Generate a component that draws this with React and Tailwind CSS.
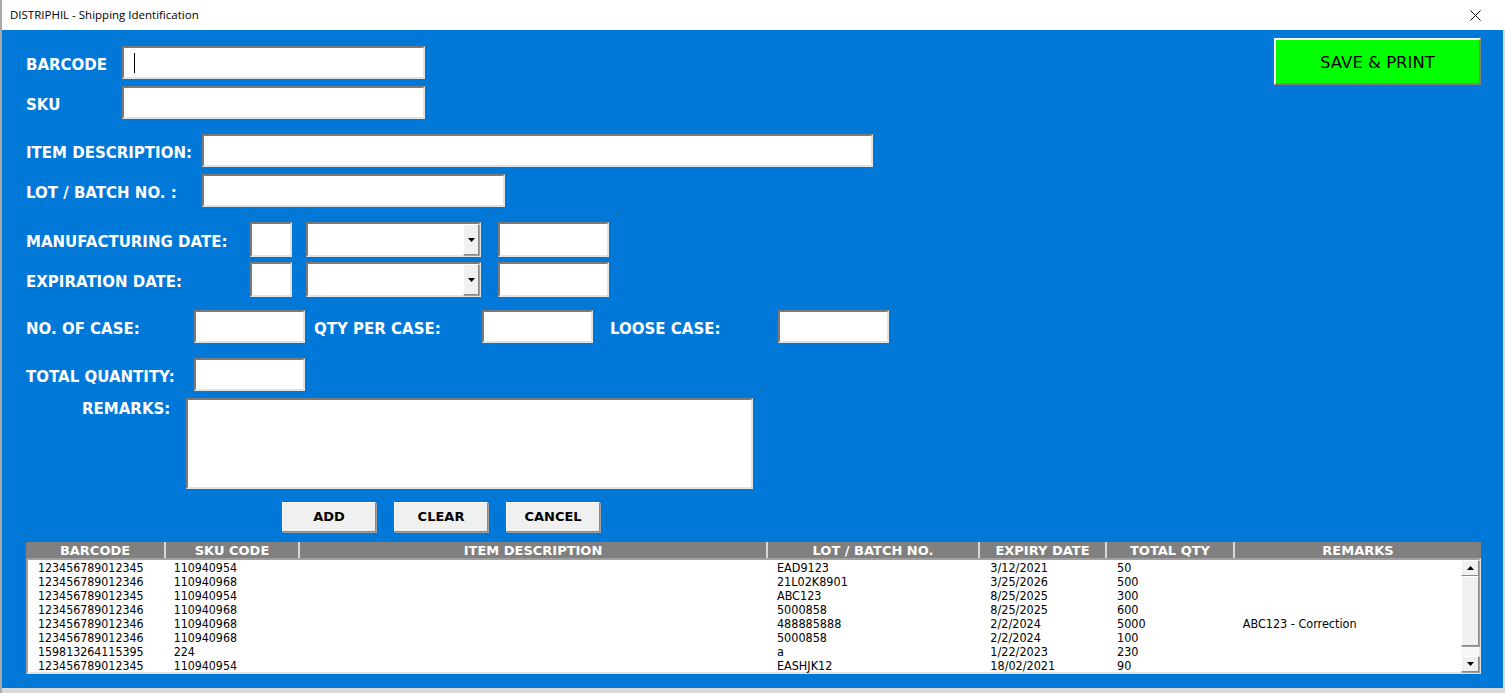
const LABEL = "font-['DejaVu_Sans',sans-serif] font-bold text-[15px] text-white whitespace-nowrap pt-[5px]";
const SUNKEN = "bg-white border-2 border-t-[#7a7a7a] border-l-[#7a7a7a] border-b-[#e3e3e3] border-r-[#e3e3e3]";
const RAISED = "bg-[#f0f0f0] border border-t-white border-l-white border-b-[#8a8a8a] border-r-[#8a8a8a] shadow-[1px_1px_0_#a0a0a0]";

const rows = [
  ["123456789012345", "110940954", "", "EAD9123", "3/12/2021", "50", ""],
  ["123456789012346", "110940968", "", "21L02K8901", "3/25/2026", "500", ""],
  ["123456789012345", "110940954", "", "ABC123", "8/25/2025", "300", ""],
  ["123456789012346", "110940968", "", "5000858", "8/25/2025", "600", ""],
  ["123456789012346", "110940968", "", "488885888", "2/2/2024", "5000", "ABC123 - Correction"],
  ["123456789012346", "110940968", "", "5000858", "2/2/2024", "100", ""],
  ["159813264115395", "224", "", "a", "1/22/2023", "230", ""],
  ["123456789012345", "110940954", "", "EASHJK12", "18/02/2021", "90", ""],
];

const headers = ["BARCODE", "SKU CODE", "ITEM DESCRIPTION", "LOT / BATCH NO.", "EXPIRY DATE", "TOTAL QTY", "REMARKS"];
const widths = ["w-[138px]", "w-[134px]", "w-[468px]", "w-[212px]", "w-[127px]", "w-[128px]", "w-[248px]"];
const pads = ["pl-[10px]", "pl-[8px]", "pl-[9px]", "pl-[11px]", "pl-[13px]", "pl-[13px]", "pl-[11px]"];

function Box({ className }) {
  return <div className={`${SUNKEN} ${className}`} />;
}

function Combo() {
  return (
    <div className={`${SUNKEN} w-[175px] h-[35px] flex justify-end`}>
      <div className={`${RAISED} w-[16px] h-full flex items-center justify-center`}>
        <svg width="7" height="4" viewBox="0 0 7 4"><path d="M0 0h7L3.5 4z" fill="#000" /></svg>
      </div>
    </div>
  );
}

function Btn({ children }) {
  return (
    <button className={`${RAISED} w-[94px] h-[30px] font-['DejaVu_Sans',sans-serif] font-bold text-[13px] text-black`}>
      {children}
    </button>
  );
}

export default function App() {
  return (
    <div className="w-[1505px] h-[693px] flex flex-col bg-[#d9d9d9] border-l-2 border-[#a8a8a8] overflow-hidden">
      <div className="h-[30px] bg-white flex items-center justify-between pl-[8px] pr-[24px] shrink-0">
        <span className="font-['Open_Sans',sans-serif] text-[11.5px] text-black">DISTRIPHIL - Shipping Identification</span>
        <svg width="11" height="11" viewBox="0 0 11 11"><path d="M0.5 0.5l10 10M10.5 0.5l-10 10" stroke="#000" strokeWidth="1" /></svg>
      </div>

      <div className="h-[658px] bg-[#0078d7] mr-[2px] pl-[24px] pr-[22px] flex flex-col shrink-0">
        <div className="flex justify-between">
          <div className="flex flex-col">
            <div className="flex items-center mt-[16px] h-[33px]">
              <span className={`${LABEL} w-[96px]`}>BARCODE</span>
              <div className={`${SUNKEN} w-[303px] h-[33px] flex items-center pl-[10px]`}>
                <div className="w-px h-[20px] bg-black" />
              </div>
            </div>
            <div className="flex items-center mt-[7px] h-[33px]">
              <span className={`${LABEL} w-[96px]`}>SKU</span>
              <Box className="w-[303px] h-[33px]" />
            </div>
          </div>
          <button className="mt-[8px] w-[207px] h-[47px] bg-[#00ff00] border-2 border-t-white border-l-white border-b-[#808080] border-r-[#808080] font-['DejaVu_Sans',sans-serif] text-[16.5px] text-black pt-[3px]">
            SAVE &amp; PRINT
          </button>
        </div>

        <div className="flex items-center mt-[15px] h-[33px]">
          <span className={`${LABEL} w-[176px]`}>ITEM DESCRIPTION:</span>
          <Box className="w-[671px] h-[33px]" />
        </div>
        <div className="flex items-center mt-[7px] h-[33px]">
          <span className={`${LABEL} w-[176px]`}>LOT / BATCH NO. :</span>
          <Box className="w-[303px] h-[33px]" />
        </div>

        <div className="flex items-center mt-[15px] h-[35px]">
          <span className={`${LABEL} w-[224px]`}>MANUFACTURING DATE:</span>
          <Box className="w-[42px] h-[35px]" />
          <div className="ml-[14px]"><Combo /></div>
          <Box className="ml-[17px] w-[111px] h-[35px]" />
        </div>
        <div className="flex items-center mt-[5px] h-[35px]">
          <span className={`${LABEL} w-[224px]`}>EXPIRATION DATE:</span>
          <Box className="w-[42px] h-[35px]" />
          <div className="ml-[14px]"><Combo /></div>
          <Box className="ml-[17px] w-[111px] h-[35px]" />
        </div>

        <div className="flex items-center mt-[13px] h-[33px]">
          <span className={`${LABEL} w-[168px]`}>NO. OF CASE:</span>
          <Box className="w-[111px] h-[33px]" />
          <span className={`${LABEL} w-[168px] ml-[9px]`}>QTY PER CASE:</span>
          <Box className="w-[111px] h-[33px]" />
          <span className={`${LABEL} w-[168px] ml-[17px]`}>LOOSE CASE:</span>
          <Box className="w-[111px] h-[33px]" />
        </div>

        <div className="flex items-center mt-[15px] h-[33px]">
          <span className={`${LABEL} w-[168px]`}>TOTAL QUANTITY:</span>
          <Box className="w-[111px] h-[33px]" />
        </div>

        <div className="flex mt-[7px]">
          <span className="font-['DejaVu_Sans',sans-serif] font-bold text-[15px] text-white whitespace-nowrap ml-[56px] w-[104px]">REMARKS:</span>
          <Box className="w-[567px] h-[91px]" />
        </div>

        <div className="flex gap-[18px] mt-[13px] ml-[256px]">
          <Btn>ADD</Btn>
          <Btn>CLEAR</Btn>
          <Btn>CANCEL</Btn>
        </div>

        <div className="mt-[10px] w-[1455px]">
          <div className="flex h-[16px] bg-[#808080]">
            {headers.map((h, i) => (
              <div
                key={h}
                className={`${widths[i]} ${i > 0 ? "border-l-2 border-[#d8d8d8]" : ""} flex items-center justify-center font-['DejaVu_Sans',sans-serif] font-bold text-[13px] leading-none text-white`}
              >
                {h}
              </div>
            ))}
          </div>
          <div className="relative h-[116px] bg-white border-2 border-t-[#a0a0a0] border-l-[#a0a0a0] border-b-[#e3e3e3] border-r-[#e3e3e3] pt-[1px]">
            {rows.map((r, ri) => (
              <div key={ri} className="flex h-[14px] items-center">
                {r.map((c, ci) => (
                  <div
                    key={ci}
                    className={`${widths[ci]} ${pads[ci]} whitespace-nowrap leading-[14px] text-black ${
                      ci >= 3
                        ? "font-['Liberation_Sans_Narrow','DejaVu_Sans_Condensed',sans-serif] text-[12.5px]"
                        : "font-['DejaVu_Sans_Condensed','DejaVu_Sans',sans-serif] text-[12.3px]"
                    }`}
                  >
                    {c}
                  </div>
                ))}
              </div>
            ))}
            <div className="absolute right-0 top-0 bottom-0 w-[18px] flex flex-col bg-[repeating-conic-gradient(#f0f0f0_0_25%,#ffffff_0_50%)] bg-[length:2px_2px]">
              <div className={`${RAISED} h-[16px] flex items-center justify-center`}>
                <svg width="7" height="4" viewBox="0 0 7 4"><path d="M0 4h7L3.5 0z" fill="#000" /></svg>
              </div>
              <div className={`${RAISED} h-[70px]`} />
              <div className="flex-1" />
              <div className={`${RAISED} h-[16px] flex items-center justify-center`}>
                <svg width="7" height="4" viewBox="0 0 7 4"><path d="M0 0h7L3.5 4z" fill="#000" /></svg>
              </div>
            </div>
          </div>
        </div>
      </div>
    </div>
  );
}
